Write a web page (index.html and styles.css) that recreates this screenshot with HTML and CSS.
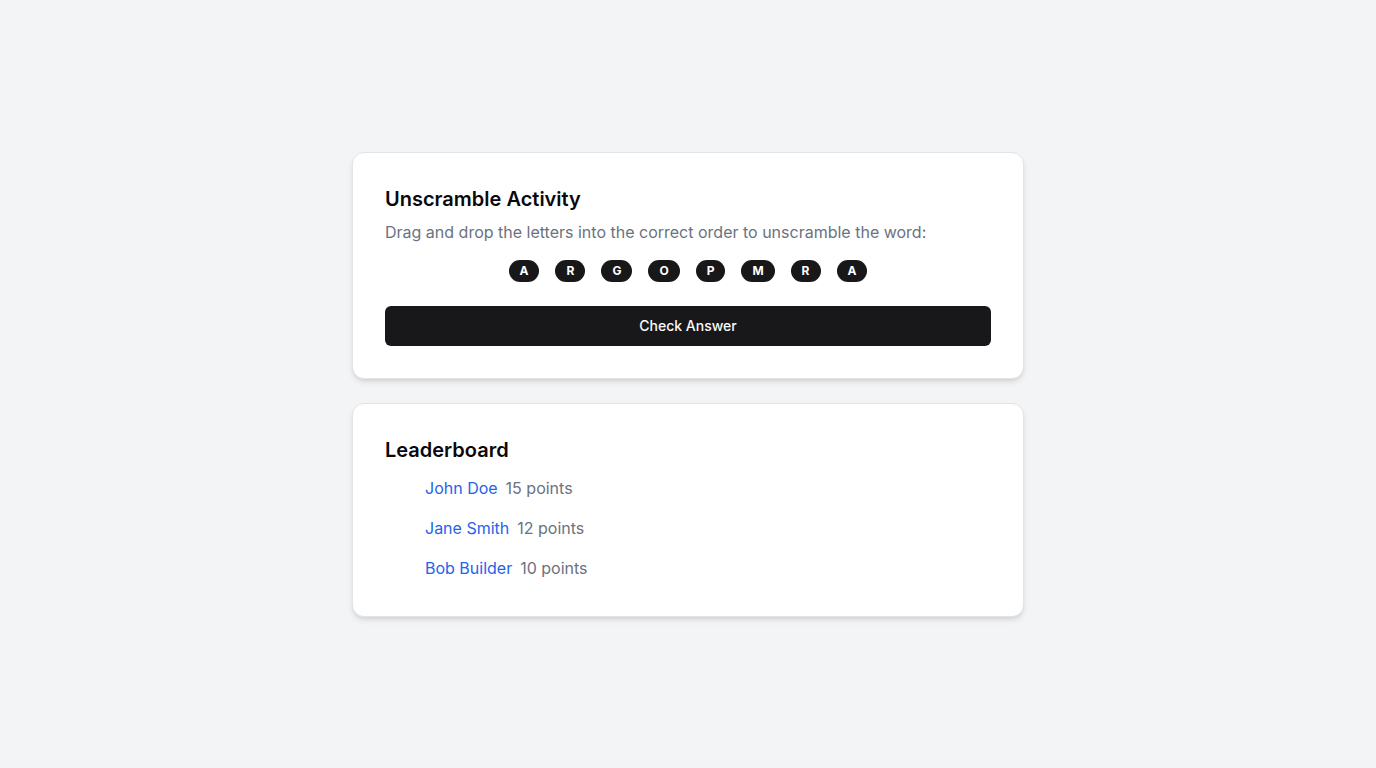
FILE: index.html
```html
<!DOCTYPE html>
<html lang="en">
<head>
<meta charset="utf-8">
<title>Unscramble Activity</title>
<link rel="stylesheet" href="styles.css">
</head>
<body>
<main class="page">
  <section class="card">
    <h2 class="card-title">Unscramble Activity</h2>
    <p class="card-desc">Drag and drop the letters into the correct order to unscramble the word:</p>
    <div class="letters">
      <span class="letter">A</span>
      <span class="letter">R</span>
      <span class="letter">G</span>
      <span class="letter">O</span>
      <span class="letter">P</span>
      <span class="letter">M</span>
      <span class="letter">R</span>
      <span class="letter">A</span>
    </div>
    <button class="check-btn" type="button">Check Answer</button>
  </section>
  <section class="card">
    <h2 class="card-title board-title">Leaderboard</h2>
    <ul class="board">
      <li class="board-item"><span class="name">John Doe</span><span class="points">15 points</span></li>
      <li class="board-item"><span class="name">Jane Smith</span><span class="points">12 points</span></li>
      <li class="board-item"><span class="name">Bob Builder</span><span class="points">10 points</span></li>
    </ul>
  </section>
</main>
</body>
</html>
```
FILE: styles.css
```css
* { box-sizing: border-box; }
html, body { margin: 0; padding: 0; }
body {
  background: #f3f4f6;
  font-family: Inter, "Noto Sans", "Liberation Sans", sans-serif;
  color: #09090b;
  min-height: 100vh;
}
.page {
  min-height: 100vh;
  display: flex;
  flex-direction: column;
  align-items: center;
  justify-content: center;
  gap: 24px;
}
.card {
  width: 672px;
  background: #ffffff;
  border: 1px solid #e4e4e7;
  border-radius: 12px;
  padding: 32px;
  box-shadow: 0 4px 6px -1px rgba(0,0,0,0.1), 0 2px 4px -2px rgba(0,0,0,0.1);
}
.card-title {
  margin: 0 0 7px;
  font-size: 20px;
  line-height: 28px;
  font-weight: 600;
  color: #09090b;
}
.card-desc {
  margin: 0;
  font-size: 16px;
  line-height: 24px;
  color: #6b7280;
}
.letters {
  display: flex;
  justify-content: center;
  gap: 16px;
  margin-top: 16px;
}
.letter {
  display: inline-block;
  background: #18181b;
  color: #ffffff;
  font-size: 12px;
  font-weight: 700;
  line-height: 16px;
  padding: 3px 11px;
  border-radius: 9999px;
  text-align: center;
}
.check-btn {
  display: block;
  width: 100%;
  margin-top: 24px;
  height: 40px;
  border: none;
  border-radius: 6px;
  background: #18181b;
  color: #fafafa;
  font-family: inherit;
  font-size: 14px;
  font-weight: 500;
}
.board-title { margin-bottom: 12px; }
.board {
  list-style: none;
  margin: 0;
  padding: 0 0 4px 40px;
  display: flex;
  flex-direction: column;
  gap: 16px;
}
.board-item {
  display: flex;
  gap: 8px;
  font-size: 16px;
  line-height: 24px;
}
.name { color: #2563eb; }
.points { color: #6b7280; }
```
